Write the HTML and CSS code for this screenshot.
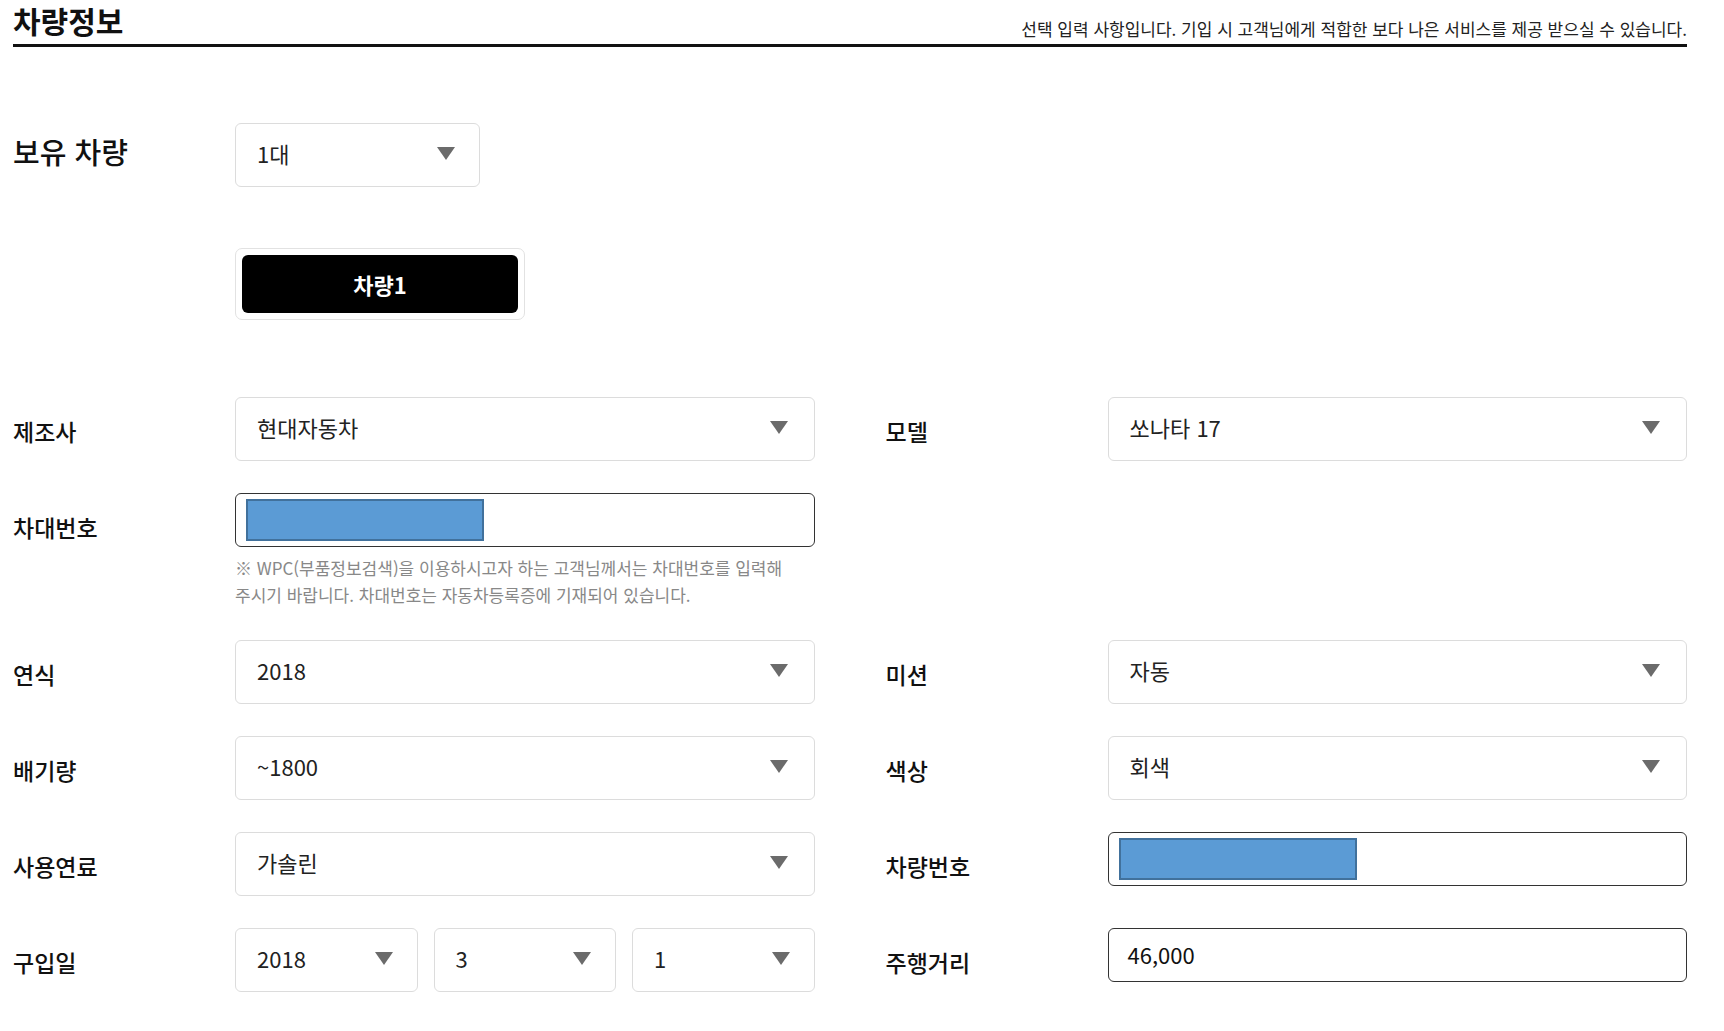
FILE: index.html
```html
<!DOCTYPE html>
<html lang="ko">
<head>
    <meta charset="UTF-8">
    <meta name="viewport" content="width=device-width, initial-scale=1.0">
    <title>차량정보</title>
    <link rel="stylesheet" href="styles.css">
</head>
<body>
    <div class="page">
        <div class="section-head">
            <h2>차량정보</h2>
            <p class="desc">선택 입력 사항입니다. 기입 시 고객님에게 적합한 보다 나은 서비스를 제공 받으실 수 있습니다.</p>
        </div>

        <div class="own-row">
            <div class="own-label">보유 차량</div>
            <div class="select select-own">
                <span>1대</span>
                <svg class="arrow" viewBox="0 0 18 13"><polygon points="0,0 18,0 9,13" /></svg>
            </div>
        </div>

        <div class="tabs">
            <button class="tab active">차량1</button>
        </div>

        <div class="form-grid">
            <div class="field">
                <label>제조사</label>
                <div class="select">
                    <span>현대자동차</span>
                    <svg class="arrow" viewBox="0 0 18 13"><polygon points="0,0 18,0 9,13" /></svg>
                </div>
            </div>
            <div class="field">
                <label>모델</label>
                <div class="select">
                    <span>쏘나타 17</span>
                    <svg class="arrow" viewBox="0 0 18 13"><polygon points="0,0 18,0 9,13" /></svg>
                </div>
            </div>

            <div class="field">
                <label>차대번호</label>
                <div class="control">
                    <div class="input"><span class="masked"></span></div>
                    <p class="hint">※ WPC(부품정보검색)을 이용하시고자 하는 고객님께서는 차대번호를 입력해<br>주시기 바랍니다. 차대번호는 자동차등록증에 기재되어 있습니다.</p>
                </div>
            </div>
            <div class="field"></div>

            <div class="field">
                <label>연식</label>
                <div class="select">
                    <span>2018</span>
                    <svg class="arrow" viewBox="0 0 18 13"><polygon points="0,0 18,0 9,13" /></svg>
                </div>
            </div>
            <div class="field">
                <label>미션</label>
                <div class="select">
                    <span>자동</span>
                    <svg class="arrow" viewBox="0 0 18 13"><polygon points="0,0 18,0 9,13" /></svg>
                </div>
            </div>

            <div class="field">
                <label>배기량</label>
                <div class="select">
                    <span>~1800</span>
                    <svg class="arrow" viewBox="0 0 18 13"><polygon points="0,0 18,0 9,13" /></svg>
                </div>
            </div>
            <div class="field">
                <label>색상</label>
                <div class="select">
                    <span>회색</span>
                    <svg class="arrow" viewBox="0 0 18 13"><polygon points="0,0 18,0 9,13" /></svg>
                </div>
            </div>

            <div class="field">
                <label>사용연료</label>
                <div class="select">
                    <span>가솔린</span>
                    <svg class="arrow" viewBox="0 0 18 13"><polygon points="0,0 18,0 9,13" /></svg>
                </div>
            </div>
            <div class="field">
                <label>차량번호</label>
                <div class="control">
                    <div class="input"><span class="masked"></span></div>
                </div>
            </div>

            <div class="field">
                <label>구입일</label>
                <div class="date-group">
                    <div class="select">
                        <span>2018</span>
                        <svg class="arrow" viewBox="0 0 18 13"><polygon points="0,0 18,0 9,13" /></svg>
                    </div>
                    <div class="select">
                        <span>3</span>
                        <svg class="arrow" viewBox="0 0 18 13"><polygon points="0,0 18,0 9,13" /></svg>
                    </div>
                    <div class="select">
                        <span>1</span>
                        <svg class="arrow" viewBox="0 0 18 13"><polygon points="0,0 18,0 9,13" /></svg>
                    </div>
                </div>
            </div>
            <div class="field">
                <label>주행거리</label>
                <div class="control">
                    <div class="input"><span class="value">46,000</span></div>
                </div>
            </div>
        </div>
    </div>
</body>
</html>
```

FILE: styles.css
```css
body, html {
    margin: 0;
    padding: 0;
    font-family: "Noto Sans CJK KR", "Noto Sans", sans-serif;
    background-color: white;
    color: #111;
}

.page {
    padding: 0 37px 0 13px;
}

/* 상단 제목 */
.section-head {
    display: flex;
    justify-content: space-between;
    align-items: flex-end;
    padding-bottom: 4px;
    border-bottom: 3px solid #111;
}

.section-head h2 {
    margin: 0;
    font-size: 30px;
    line-height: 40px;
    font-weight: 700;
}

.desc {
    margin: 0 0 0 0;
    font-size: 17px;
    line-height: 22px;
    color: #222;
}

/* 보유 차량 */
.own-row {
    display: flex;
    align-items: center;
    margin-top: 76px;
}

.own-label {
    width: 222px;
    padding-bottom: 8px;
    font-size: 29px;
    font-weight: 500;
}

.select {
    box-sizing: border-box;
    height: 64px;
    display: flex;
    justify-content: space-between;
    align-items: center;
    padding: 0 26px 4px 21px;
    border: 1px solid #dcdcdc;
    border-radius: 6px;
    font-size: 22px;
    color: #222;
    background: white;
}

.select-own {
    width: 245px;
    padding-right: 24px;
}

.arrow {
    width: 18px;
    height: 13px;
    fill: #6b6b6b;
}

/* 차량 탭 */
.tabs {
    box-sizing: border-box;
    width: 290px;
    height: 72px;
    margin: 61px 0 0 222px;
    padding: 6px;
    border: 1px solid #e2e2e2;
    border-radius: 7px;
}

.tab {
    width: 100%;
    height: 100%;
    border: none;
    border-radius: 6px;
    background-color: black;
    color: white;
    font-family: inherit;
    font-size: 22px;
    font-weight: 700;
    cursor: pointer;
}

/* 입력 폼 */
.form-grid {
    display: grid;
    grid-template-columns: 1fr 1fr;
    column-gap: 71px;
    row-gap: 32px;
    margin-top: 77px;
}

.field {
    display: flex;
    align-items: flex-start;
}

.field label {
    flex: 0 0 222px;
    height: 64px;
    line-height: 68px;
    font-size: 23px;
    font-weight: 500;
}

.field .select,
.field .control,
.date-group {
    flex: 1;
}

.date-group {
    display: grid;
    grid-template-columns: 1fr 1fr 1fr;
    gap: 16px;
}

.date-group .select {
    padding-right: 24px;
}

.input {
    box-sizing: border-box;
    height: 54px;
    display: flex;
    align-items: center;
    padding: 0 10px 2px 10px;
    border: 1px solid #333;
    border-radius: 6px;
    font-size: 22px;
    color: #111;
}

.input .value {
    padding-left: 9px;
}

.masked {
    box-sizing: border-box;
    width: 238px;
    height: 42px;
    margin-top: 2px;
    background-color: #5b9bd5;
    border: 2px solid #41719c;
}

.hint {
    margin: 7px 0 0 0;
    font-size: 17px;
    line-height: 27px;
    color: #888;
}
```
